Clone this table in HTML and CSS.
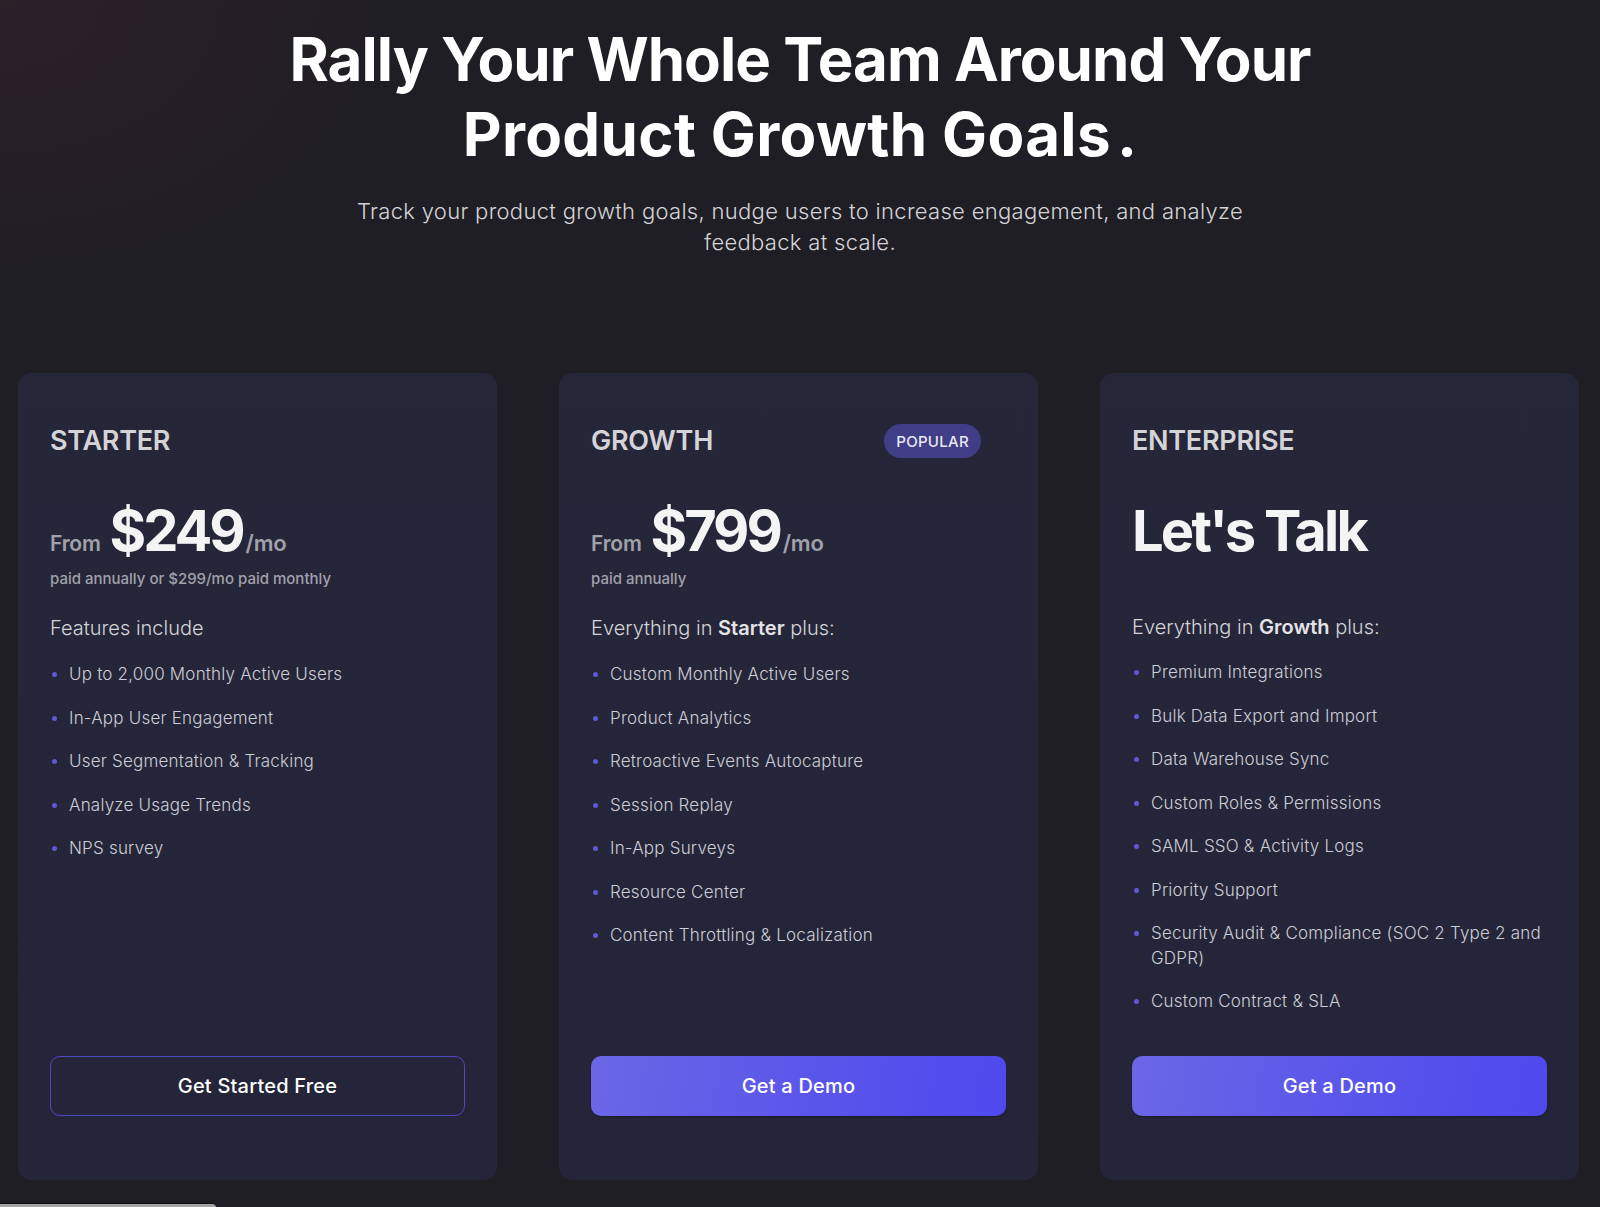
FILE: index.html
```html
<!DOCTYPE html>
<html lang="en">
<head>
<meta charset="utf-8">
<title>Pricing</title>
<link rel="stylesheet" href="styles.css">
</head>
<body>
<section class="hero">
  <h1 class="hero-title">Rally Your Whole Team Around Your<br><span class="line2">Product Growth Goals<span class="dot">.</span></span></h1>
  <p class="hero-sub">Track your product growth goals, nudge users to increase engagement, and analyze feedback at scale.</p>
</section>

<section class="plans">
  <article class="card">
    <div class="card-head">
      <h2 class="plan-name">STARTER</h2>
    </div>
    <div class="price">
      <span class="from">From</span><span class="amount">$249</span><span class="per">/mo</span>
    </div>
    <p class="billing">paid annually or $299/mo paid monthly</p>
    <p class="lead">Features include</p>
    <ul class="features">
      <li>Up to 2,000 Monthly Active Users</li>
      <li>In-App User Engagement</li>
      <li>User Segmentation &amp; Tracking</li>
      <li>Analyze Usage Trends</li>
      <li>NPS survey</li>
    </ul>
    <a class="btn btn-outline" href="#">Get Started Free</a>
  </article>

  <article class="card">
    <div class="card-head">
      <h2 class="plan-name">GROWTH</h2>
      <span class="badge">POPULAR</span>
    </div>
    <div class="price">
      <span class="from">From</span><span class="amount">$799</span><span class="per">/mo</span>
    </div>
    <p class="billing">paid annually</p>
    <p class="lead">Everything in <strong>Starter</strong> plus:</p>
    <ul class="features">
      <li>Custom Monthly Active Users</li>
      <li>Product Analytics</li>
      <li>Retroactive Events Autocapture</li>
      <li>Session Replay</li>
      <li>In-App Surveys</li>
      <li>Resource Center</li>
      <li>Content Throttling &amp; Localization</li>
    </ul>
    <a class="btn btn-solid" href="#">Get a Demo</a>
  </article>

  <article class="card">
    <div class="card-head">
      <h2 class="plan-name">ENTERPRISE</h2>
    </div>
    <div class="price">
      <span class="amount talk">Let's Talk</span>
    </div>
    <p class="billing billing-empty">&nbsp;</p>
    <p class="lead lead-ent">Everything in <strong>Growth</strong> plus:</p>
    <ul class="features features-ent">
      <li>Premium Integrations</li>
      <li>Bulk Data Export and Import</li>
      <li>Data Warehouse Sync</li>
      <li>Custom Roles &amp; Permissions</li>
      <li>SAML SSO &amp; Activity Logs</li>
      <li>Priority Support</li>
      <li>Security Audit &amp; Compliance (SOC 2 Type 2 and GDPR)</li>
      <li>Custom Contract &amp; SLA</li>
    </ul>
    <a class="btn btn-solid" href="#">Get a Demo</a>
  </article>
</section>

<div class="scroll-thumb"></div>
</body>
</html>
```

FILE: styles.css
```css
* {
  box-sizing: border-box;
}

html, body {
  margin: 0;
  padding: 0;
}

body {
  width: 1600px;
  min-height: 1207px;
  background-color: #1f1e24;
  background-image: radial-gradient(ellipse 400px 280px at 0 0, rgba(66, 36, 46, 0.38), rgba(66, 36, 46, 0) 100%);
  font-family: Inter, "Noto Sans", "Liberation Sans", sans-serif;
  color: #d4d4d8;
  overflow: hidden;
}

.hero {
  display: flex;
  flex-direction: column;
  align-items: center;
  text-align: center;
  padding-top: 22px;
}

.hero-title {
  margin: 0;
  font-size: 60px;
  line-height: 75px;
  font-weight: 700;
  letter-spacing: -0.016em;
  color: #ffffff;
}

.hero-title .line2 {
  letter-spacing: 0.006em;
}

.hero-title .dot {
  margin-left: 0.1em;
}

.hero-sub {
  margin: 24px 0 0;
  max-width: 910px;
  font-size: 22px;
  line-height: 31px;
  font-weight: 300;
  color: #d4d4d8;
  letter-spacing: 0.014em;
}

.plans {
  display: grid;
  grid-template-columns: repeat(3, 479px);
  column-gap: 62px;
  padding: 0 21px 0 18px;
  margin-top: 115px;
}

.card {
  display: flex;
  flex-direction: column;
  background: linear-gradient(180deg, #262639 0%, #25253a 100%);
  border-radius: 14px;
  padding: 50px 32px 64px;
}

.card-head {
  display: flex;
  align-items: center;
  justify-content: space-between;
  height: 36px;
}

.plan-name {
  margin: 0;
  font-size: 27px;
  line-height: 36px;
  font-weight: 600;
  letter-spacing: -0.01em;
  color: #d4d4d8;
}

.badge {
  display: inline-flex;
  align-items: center;
  height: 34px;
  padding: 0 12px;
  margin-right: 25px;
  border-radius: 17px;
  background: #403e86;
  color: #e8e8f4;
  font-size: 15px;
  font-weight: 500;
  letter-spacing: 0.02em;
}

.price {
  display: flex;
  align-items: baseline;
  margin-top: 40px;
  height: 64px;
}

.from {
  font-size: 21px;
  line-height: 22px;
  font-weight: 600;
  color: #a1a1aa;
  margin-right: 9px;
  letter-spacing: -0.01em;
}

.amount {
  font-size: 56px;
  line-height: 64px;
  font-weight: 700;
  color: #f4f4f5;
  letter-spacing: -0.055em;
  margin-right: 3px;
}

.talk {
  letter-spacing: -0.05em;
}

.per {
  font-size: 22px;
  line-height: 22px;
  font-weight: 600;
  color: #a1a1aa;
  letter-spacing: -0.01em;
}

.billing {
  margin: 6px 0 0;
  font-size: 15px;
  line-height: 20px;
  font-weight: 500;
  color: #a1a1aa;
}

.lead {
  margin: 25px 0 0;
  font-size: 20px;
  line-height: 28px;
  font-weight: 300;
  color: #d4d4d8;
}

.lead-ent {
  margin-top: 24px;
}

.lead strong {
  font-weight: 600;
  color: #e4e4e7;
}

.features {
  list-style: none;
  margin: 20px 0 0;
  padding: 0;
  flex: 1;
  display: flex;
  flex-direction: column;
  gap: 19px;
}

.features-ent {
  margin-top: 19px;
}

.features li {
  position: relative;
  padding-left: 19px;
  font-size: 17px;
  line-height: 24.5px;
  font-weight: 300;
  color: #cdcdd5;
  letter-spacing: 0.012em;
}

.features li::before {
  content: "";
  position: absolute;
  left: 2px;
  top: 10px;
  width: 5px;
  height: 5px;
  border-radius: 50%;
  background: #5d59d4;
}

.btn {
  display: flex;
  align-items: center;
  justify-content: center;
  height: 60px;
  margin-top: 42px;
  border-radius: 10px;
  font-size: 20px;
  font-weight: 500;
  color: #ffffff;
  text-decoration: none;
  letter-spacing: 0.01em;
}

.btn-outline {
  border: 1px solid #4d48c4;
  background: transparent;
}

.btn-solid {
  background: linear-gradient(100deg, #6b67e6 0%, #5a55ea 55%, #4f48ee 100%);
  box-shadow: 0 1px 2px rgba(0, 0, 0, 0.3);
}

.scroll-thumb {
  position: fixed;
  left: 0;
  bottom: 0;
  width: 216px;
  height: 4px;
  background: #a3a3a3;
  border-top-right-radius: 4px;
  border-top: 1px solid #0e0e10;
}
```
